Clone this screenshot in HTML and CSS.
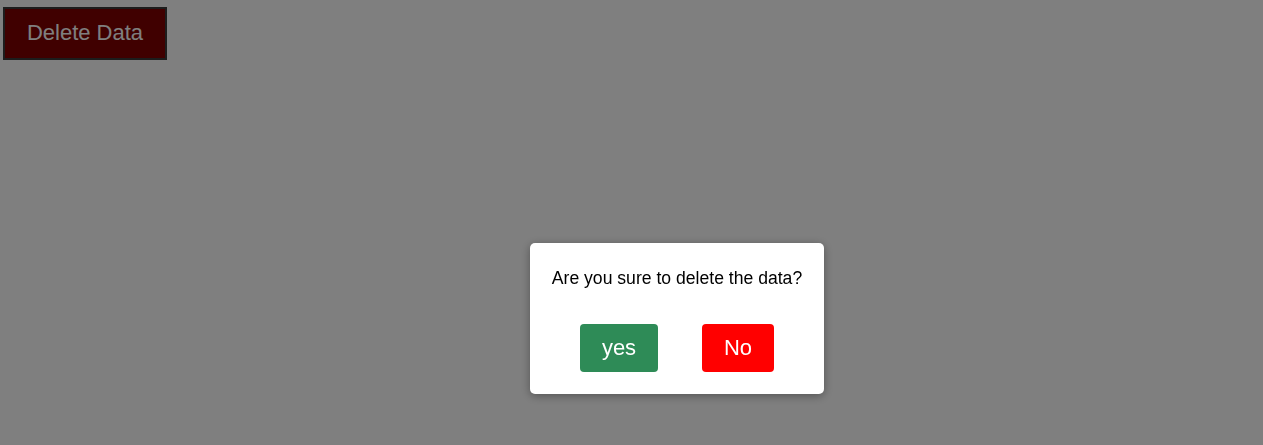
FILE: index.html
```html
<!DOCTYPE html>
<html lang="en">
<head>
<meta charset="utf-8">
<title>Delete Data</title>
<link rel="stylesheet" href="styles.css">
</head>
<body>
<button class="delete-btn">Delete Data</button>
<div class="overlay">
  <div class="modal">
    <p class="modal-text">Are you sure to delete the data?</p>
    <div class="modal-actions">
      <button class="btn btn-yes">yes</button>
      <button class="btn btn-no">No</button>
    </div>
  </div>
</div>
</body>
</html>
```
FILE: styles.css
```css
html, body {
  margin: 0;
  padding: 0;
  background: #ffffff;
  font-family: "Liberation Sans", Arial, sans-serif;
}

.delete-btn {
  display: block;
  margin: 7px 0 0 3px;
  height: 53px;
  width: 164px;
  padding: 0 0 2px;
  background: #800000;
  color: #ffffff;
  border: 2px solid #3a3a3a;
  font-family: "Liberation Sans", Arial, sans-serif;
  font-size: 22px;
  box-sizing: border-box;
}

.overlay {
  position: fixed;
  inset: 0;
  background: rgba(0, 0, 0, 0.5);
}

.modal {
  position: absolute;
  left: 530px;
  top: 243px;
  width: 294px;
  height: 151px;
  box-sizing: border-box;
  background: #ffffff;
  border-radius: 5px;
  box-shadow: 0 2px 10px rgba(0, 0, 0, 0.35);
  padding: 25px 0 0;
  display: flex;
  flex-direction: column;
  align-items: center;
}

.modal-text {
  margin: 0;
  font-size: 17.6px;
  line-height: 20px;
  color: #000000;
  white-space: nowrap;
}

.modal-actions {
  margin-top: 36px;
  display: flex;
  gap: 44px;
}

.btn {
  height: 48px;
  border: none;
  border-radius: 4px;
  color: #ffffff;
  font-family: "Liberation Sans", Arial, sans-serif;
  font-size: 22px;
  padding: 0;
}

.btn-yes {
  width: 78px;
  background: #2e8b57;
}

.btn-no {
  width: 72px;
  background: #ff0000;
}
```
